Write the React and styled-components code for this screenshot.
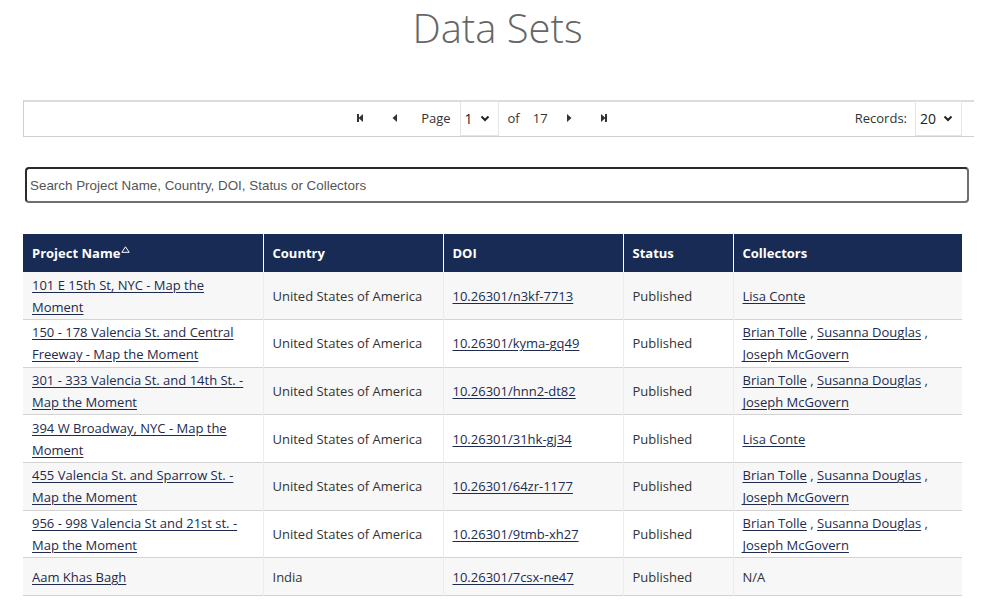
import React from "react";
import styled, { createGlobalStyle } from "styled-components";

const GlobalStyle = createGlobalStyle`
  html, body {
    margin: 0;
    padding: 0;
    background: #fff;
  }
  body {
    font-family: "Open Sans", "Noto Sans", sans-serif;
    color: #333;
  }
`;

const rows = [
  {
    name: "101 E 15th St, NYC - Map the Moment",
    country: "United States of America",
    doi: "10.26301/n3kf-7713",
    status: "Published",
    collectors: ["Lisa Conte"],
  },
  {
    name: "150 - 178 Valencia St. and Central Freeway - Map the Moment",
    country: "United States of America",
    doi: "10.26301/kyma-gq49",
    status: "Published",
    collectors: ["Brian Tolle", "Susanna Douglas", "Joseph McGovern"],
  },
  {
    name: "301 - 333 Valencia St. and 14th St. - Map the Moment",
    country: "United States of America",
    doi: "10.26301/hnn2-dt82",
    status: "Published",
    collectors: ["Brian Tolle", "Susanna Douglas", "Joseph McGovern"],
  },
  {
    name: "394 W Broadway, NYC - Map the Moment",
    country: "United States of America",
    doi: "10.26301/31hk-gj34",
    status: "Published",
    collectors: ["Lisa Conte"],
  },
  {
    name: "455 Valencia St. and Sparrow St. - Map the Moment",
    country: "United States of America",
    doi: "10.26301/64zr-1177",
    status: "Published",
    collectors: ["Brian Tolle", "Susanna Douglas", "Joseph McGovern"],
  },
  {
    name: "956 - 998 Valencia St and 21st st. - Map the Moment",
    country: "United States of America",
    doi: "10.26301/9tmb-xh27",
    status: "Published",
    collectors: ["Brian Tolle", "Susanna Douglas", "Joseph McGovern"],
  },
  {
    name: "Aam Khas Bagh",
    country: "India",
    doi: "10.26301/7csx-ne47",
    status: "Published",
    collectors: [],
  },
];

const Page = styled.div`
  width: 995px;
`;

const Content = styled.div`
  padding-left: 23px;
`;

const Title = styled.h1`
  margin: 0;
  height: 100px;
  padding-top: 2px;
  box-sizing: border-box;
  text-align: center;
  font-family: "Open Sans", sans-serif;
  font-weight: 300;
  font-size: 40px;
  line-height: 52px;
  color: #666;
`;

const Pager = styled.div`
  width: 951px;
  height: 37px;
  box-sizing: border-box;
  border: 1px solid #cfcfcf;
  border-right: none;
  border-top: 2px solid #dcdcdc;
  display: flex;
  align-items: center;
`;

const PagerCenter = styled.div`
  flex: 1;
  display: flex;
  align-items: center;
  justify-content: center;
  font-size: 13px;
  padding-left: 93px;
  padding-bottom: 2px;
`;

const NavButton = styled.span`
  width: 34px;
  height: 20px;
  display: inline-flex;
  align-items: center;
  justify-content: center;
  color: #333;
`;

const Label = styled.span`
  font-size: 13px;
  color: #333;
  margin: 0 ${(p) => p.$gap || 8}px;
`;

const SelectBox = styled.div`
  height: 35px;
  width: ${(p) => p.$width}px;
  box-sizing: border-box;
  border: 1px solid #e4e4e4;
  display: flex;
  align-items: center;
  justify-content: space-between;
  padding: 0 8px 0 4px;
  font-size: 14px;
  color: #222;
  background: #fff;
`;

const Records = styled.div`
  display: flex;
  align-items: center;
  margin-right: 12px;
  padding-bottom: 2px;
  font-size: 13px;
`;

const Search = styled.input`
  display: block;
  margin: 30px 0 31px 2px;
  width: 944px;
  height: 36px;
  box-sizing: border-box;
  border: 2px solid #333;
  border-color: #2b2b2b #6f6f6f #6f6f6f #2b2b2b;
  border-radius: 4px;
  padding: 0 3px;
  font-family: "Liberation Sans", Arial, sans-serif;
  font-size: 13.4px;
  color: #333;
  outline: none;
  &::placeholder {
    color: #555;
  }
`;

const Table = styled.table`
  width: 939px;
  border-collapse: collapse;
  table-layout: fixed;
  font-size: 13px;
`;

const Th = styled.th`
  width: ${(p) => p.$w}px;
  background: #172b54;
  color: #fff;
  font-weight: 700;
  text-align: left;
  height: 38px;
  padding: 0 9px;
  box-sizing: border-box;
  border-left: 1px solid #fff;
  &:first-child {
    border-left: none;
  }
`;

const Tr = styled.tr`
  background: ${(p) => (p.$odd ? "#f7f7f7" : "#fff")};
  border-bottom: 1px solid #d3d3d3;
  height: ${(p) => (p.$tall ? 47.67 : 38)}px;
`;

const Td = styled.td`
  padding: 1px 9px 1px;
  line-height: 22px;
  color: #333;
  vertical-align: middle;
  border-left: 1px solid #ececec;
  &:first-child {
    border-left: none;
  }
`;

const A = styled.a`
  color: #1c2b4e;
  text-decoration: underline;
  text-underline-offset: 2px;
  cursor: pointer;
`;

const SortMark = styled.svg`
  vertical-align: 5px;
  margin-left: 1px;
`;

const Chevron = () => (
  <svg width="10" height="7" viewBox="0 0 10 7">
    <path d="M1.5 1.5 L5 5 L8.5 1.5" fill="none" stroke="#222" strokeWidth="2" />
  </svg>
);

const Tri = ({ dir, bar }) => (
  <svg width="10" height="10" viewBox="0 0 10 10">
    {dir === "left" ? (
      <>
        <path d="M7 1 L2.5 5 L7 9 Z" fill="#333" />
        {bar && <rect x="1" y="1" width="2" height="8" fill="#333" />}
      </>
    ) : (
      <>
        <path d="M3 1 L7.5 5 L3 9 Z" fill="#333" />
        {bar && <rect x="7" y="1" width="2" height="8" fill="#333" />}
      </>
    )}
  </svg>
);

const Collectors = ({ list }) => {
  if (!list.length) return "N/A";
  return list.map((c, i) => (
    <React.Fragment key={c}>
      <A>{c}</A>
      {i < list.length - 1 ? " , " : ""}
    </React.Fragment>
  ));
};

export default function App() {
  return (
    <>
      <GlobalStyle />
      <Page>
        <Title>Data Sets</Title>
        <Content>
          <Pager>
            <PagerCenter>
              <NavButton>
                <Tri dir="left" bar />
              </NavButton>
              <NavButton>
                <Tri dir="left" />
              </NavButton>
              <Label $gap={9}>Page</Label>
              <SelectBox $width={39}>
                <span>1</span>
                <Chevron />
              </SelectBox>
              <Label $gap={9}>of</Label>
              <Label $gap={4}>17</Label>
              <NavButton>
                <Tri dir="right" />
              </NavButton>
              <NavButton>
                <Tri dir="right" bar />
              </NavButton>
            </PagerCenter>
            <Records>
              <Label $gap={8}>Records:</Label>
              <SelectBox $width={47}>
                <span>20</span>
                <Chevron />
              </SelectBox>
            </Records>
          </Pager>
          <Search placeholder="Search Project Name, Country, DOI, Status or Collectors" />
          <Table>
            <thead>
              <tr>
                <Th $w={240}>
                  Project Name
                  <SortMark width="9" height="7" viewBox="0 0 9 7">
                    <path d="M4.5 0.8 L8.2 6.3 L0.8 6.3 Z" fill="none" stroke="#fff" strokeWidth="1" />
                  </SortMark>
                </Th>
                <Th $w={180}>Country</Th>
                <Th $w={180}>DOI</Th>
                <Th $w={110}>Status</Th>
                <Th $w={229}>Collectors</Th>
              </tr>
            </thead>
            <tbody>
              {rows.map((r, i) => (
                <Tr
                  key={r.doi}
                  $odd={i % 2 === 0}
                  $tall={r.collectors.length > 1 || r.name.length > 20}
                >
                  <Td>
                    <A>{r.name}</A>
                  </Td>
                  <Td>{r.country}</Td>
                  <Td>
                    <A>{r.doi}</A>
                  </Td>
                  <Td>{r.status}</Td>
                  <Td>
                    <Collectors list={r.collectors} />
                  </Td>
                </Tr>
              ))}
            </tbody>
          </Table>
        </Content>
      </Page>
    </>
  );
}
